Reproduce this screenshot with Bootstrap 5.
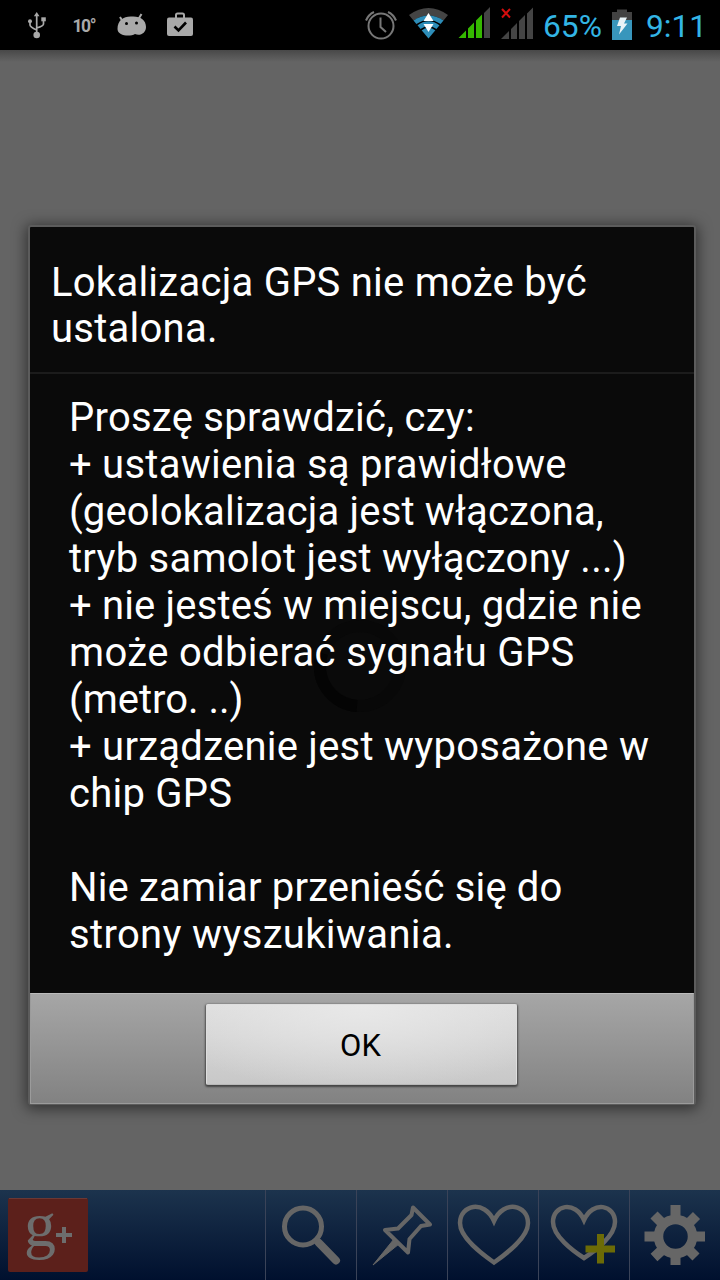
<!DOCTYPE html>
<html lang="pl">
<head>
<meta charset="utf-8">
<meta name="viewport" content="width=device-width, initial-scale=1">
<title>GPS</title>
<link href="https://cdn.jsdelivr.net/npm/bootstrap@5.3.0/dist/css/bootstrap.min.css" rel="stylesheet">
<style>
body{font-family:Roboto,"Noto Sans",sans-serif;background:#646464;width:720px;height:1280px;overflow:hidden}
.status{height:50px;background:#000;color:#33b5e5}
.status svg,.tools svg{display:block;width:100%;height:100%;overflow:visible}
.stage{height:1140px;padding:175px 24px 0 28px;background:linear-gradient(#484848,#646464 12px)}
.dialog{width:668px;height:880px;border:2px solid #5c5c5c;border-radius:3px;background:#0a0a0a;box-shadow:0 2px 14px 2px rgba(0,0,0,.5);color:#fff;font-size:40px;line-height:47px}
.dialog-title{height:147px;padding:33px 0 0 21px;border-bottom:2px solid #1c1c1c;line-height:46px}
.dialog-text{height:619px;padding:20px 0 0 39px;position:relative}
.ln{display:block;white-space:pre;position:relative;height:47px;letter-spacing:.25px}
.ln.tight{letter-spacing:.16px}
.ln.flush{letter-spacing:0}
.ln.loose{letter-spacing:.34px}
.dialog-title .ln{height:46px}
.spin{position:absolute;left:283px;top:245px;width:94px;height:94px}
.dialog-foot{height:111px;padding-top:10px;border:1px solid #9b9b9b;border-top-color:#bcbcbc;background:linear-gradient(#a6a6a6,#828282)}
.ok{width:311px;height:81px;margin-right:2px;border:1px solid #dedede;border-bottom-color:#b8b8b8;border-radius:2px;background:radial-gradient(ellipse 70% 110% at 50% 0,#e8e8e8,transparent),linear-gradient(#dcdcdc,#c8c8c8);box-shadow:0 1px 2px 1px rgba(0,0,0,.5);font-size:31px;color:#000;padding:3px 1px 0 0}
.tools{height:90px;background:linear-gradient(#1c334d,#00102e)}
.gcell{width:265px}
.tool{width:91px;border-left:1px solid #3a4358}
</style>
</head>
<body>
<header class="status">
<svg viewBox="0 0 720 50" font-family="Roboto,sans-serif">
<g fill="#a9a9a9" stroke="#a9a9a9">
<path d="M36.700 16V34M30 21V25Q30 27 36.700 30M43.500 20V24Q43.500 26 36.700 28" fill="none" stroke-width="1.700"/>
<path d="M36.700 12l2.800 4.300h-5.600z" stroke="none"/><circle cx="36.700" cy="35" r="3.300" stroke="none"/><circle cx="30" cy="21.300" r="2" stroke="none"/><path d="M41.300 17.300h4.500v4h-4.500z" stroke="none"/>
</g>
<text x="72.500" y="32" font-size="17.500" font-weight="700" fill="#a9a9a9" textLength="24">10°</text>
<path d="M117.500 29C117.500 20 124 16 132 16.500C140 16 146 20 146 27C146 33 140 36.500 135 34C130 37 117.500 36 117.500 29Z" fill="#a9a9a9"/>
<path d="M120 17l3 5M141.500 14l-3 5" stroke="#a9a9a9" stroke-width="2"/><circle cx="126.500" cy="23.500" r="1.500"/><circle cx="136.500" cy="23" r="1.500"/>
<path d="M169 17.500h22q2 0 2 2V34q0 2-2 2h-22q-2 0-2-2V19.500q0-2 2-2Z" fill="#a9a9a9"/><path d="M176 18v-3q0-1.500 1.500-1.500h5q1.500 0 1.500 1.500v3" fill="none" stroke="#a9a9a9" stroke-width="2"/><path d="M174.500 26.500l4 4 7.500-8" fill="none" stroke="#000" stroke-width="2.600"/>
<g fill="none" stroke="#777" stroke-width="2"><circle cx="381" cy="26" r="12.500"/><path d="M380.500 17.500V27l5.500 5M366 20.500q2.500-6 8-8.500M388 12q5.500 2.500 8 8.500"/></g>
<path d="M409 15q19.500-14 39 0l-4.500 5.500q-15-10-30 0z" fill="#444"/>
<path d="M413.500 20.500q15-10 30 0L428.500 38.500Z" fill="#2d8db8"/><path d="M416.500 25q12-9 24 0M420.500 30q8-6 16 0" fill="none" stroke="#000" stroke-width="1.600"/>
<path d="M428.500 13l5 8h-10zM428.500 32l5-8h-10z" fill="#fff"/>
<path d="M458.500 38L466 30.500V38zM468 38V28.500L474 22.500V38zM476 38V20.500L482 14.500V38z" fill="#35b800"/><path d="M484 38V13L490 7V38zM501 39l8-8v8zM511 39V29l6-6v16zM519 39V21l6-6v24zM527 39V13.500l6-6V39z" fill="#444"/>
<path d="M502 9l8 8.500M510 9l-8 8.500" stroke="#d40d0d" stroke-width="2"/>
<text x="543" y="37" font-size="32" fill="#33b5e5" textLength="59" lengthAdjust="spacingAndGlyphs">65%</text>
<path d="M612 12h5V9.500h10V12h5v8h-20z" fill="#424242"/><path d="M612 20h20v20h-20z" fill="#3896bc"/><path d="M620 17.500h7l-3 6h3.500L619 34.500l2-8.500h-4z" fill="#e8f3f7"/>
<text x="646" y="37" font-size="32" fill="#33b5e5" textLength="61" lengthAdjust="spacingAndGlyphs">9:11</text>
</svg>
</header>
<main class="stage">
<section class="dialog">
<div class="dialog-title"><span class="ln">Lokalizacja GPS nie może być</span><span class="ln">ustalona.</span></div>
<div class="dialog-text">
<svg class="spin" viewBox="0 0 94 94"><circle cx="47" cy="47" r="40" fill="none" stroke="#080808" stroke-width="12"/><path d="M9 34A40 40 0 0 0 44 87" fill="none" stroke="#040404" stroke-width="12"/></svg>
<span class="ln">Proszę sprawdzić, czy:</span><span class="ln">+ ustawienia są prawidłowe</span><span class="ln tight">(geolokalizacja jest włączona,</span><span class="ln">tryb samolot jest wyłączony ...)</span><span class="ln tight">+ nie jesteś w miejscu, gdzie nie</span><span class="ln loose">może odbierać sygnału GPS</span><span class="ln flush">(metro. ..)</span><span class="ln">+ urządzenie jest wyposażone w</span><span class="ln">chip GPS</span><span class="ln"> </span><span class="ln tight">Nie zamiar przenieść się do</span><span class="ln loose">strony wyszukiwania.</span>
</div>
<div class="dialog-foot d-flex justify-content-center"><button class="btn ok">OK</button></div>
</section>
</main>
<nav class="tools d-flex">
<div class="gcell"><svg viewBox="0 0 265 90"><rect x="8" y="8" width="80" height="74" rx="2" fill="#5c201b"/><path d="M9 8.500H87" stroke="#6b3834"/>
<text x="24" y="55.500" font-family="Liberation Serif,serif" font-size="64" fill="#6d6d6d">g</text><path d="M56 45h16M64 37v16" fill="none" stroke="#6d6d6d" stroke-width="4"/></svg></div>
<div class="tool"><svg viewBox="266 0 90 90" fill="none" stroke="#666"><circle cx="303" cy="36.500" r="18.500" stroke-width="5"/><path d="M315 49l5 5" stroke-width="5"/><path d="M319 53l17 17.500" stroke-width="8"  stroke-linecap="round"/></svg></div>
<div class="tool"><svg viewBox="357 0 90 90"><path d="M413 17.500L430 34.500L421 36L409.500 49L408 62.500L385 40L398 38.500L411.500 25Z" fill="none" stroke="#666" stroke-width="4" stroke-linejoin="round"/><path d="M394 49l5 5L373 75z" fill="#666" stroke="#666"/></svg></div>
<div class="tool"><svg viewBox="448 0 90 90"><path d="M494 72.500C482 64 460 48 460 33C460 15 484 9 494 31C504 9 528 15 528 33C528 48 506 64 494 72.500Z" fill="none" stroke="#666" stroke-width="4.500"/></svg></div>
<div class="tool"><svg viewBox="539 0 90 90"><path d="M584 68C573 61 553 46 553 32C553 15 575 10 584 30C593 10 615 15 615 32C615 46 595 61 584 68Z" fill="none" stroke="#666" stroke-width="4.500"/><path d="M585.500 59H615M600.500 44V73.500" stroke="#6c6b06" stroke-width="7"/></svg></div>
<div class="tool"><svg viewBox="630 0 90 90"><g transform="translate(675.500 46.500)" stroke="#666" fill="none"><circle r="17" stroke-width="9.500"/><path stroke-width="10" d="M0-31.500V-20M0 20V28.500M-31 0H-20M20 0H29.500M-21.500-21.500L-14-14M14 14L20.500 20.500M-21.500 21L-14 14M14-14L21-21"/></g></svg></div>
</nav>
<script src="https://cdn.jsdelivr.net/npm/bootstrap@5.3.0/dist/js/bootstrap.bundle.min.js"></script>
</body>
</html>
